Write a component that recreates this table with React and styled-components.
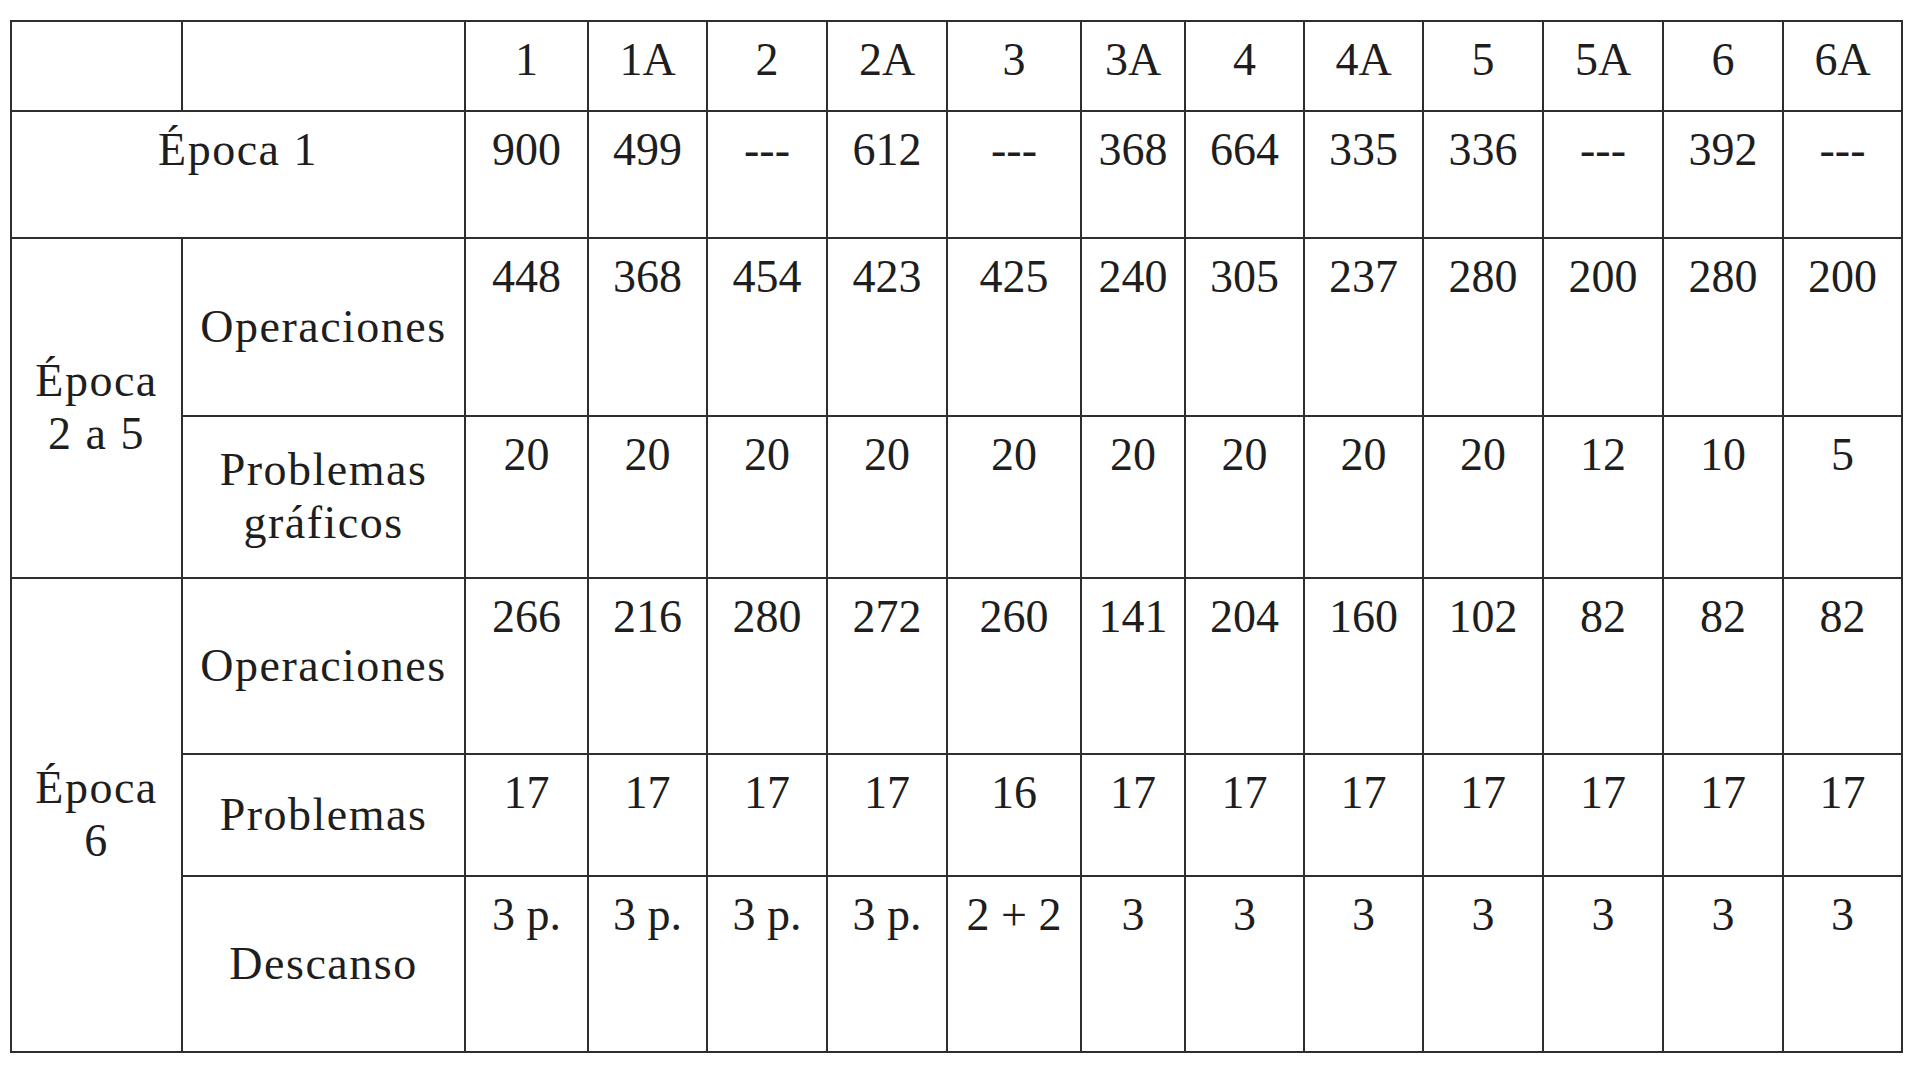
import React from 'react';
import styled, { createGlobalStyle } from 'styled-components';

const GlobalStyle = createGlobalStyle`
  html, body {
    margin: 0;
    padding: 0;
    background: #ffffff;
  }
  body {
    font-family: "Liberation Serif", "Times New Roman", serif;
    color: #1e1e1e;
  }
`;

const Page = styled.div`
  width: 1920px;
  height: 1069px;
  padding: 20px 0 0 10px;
  box-sizing: border-box;
  background: #fff;
  overflow: hidden;
`;

const Table = styled.table`
  border-collapse: collapse;
  table-layout: fixed;
  width: 1893px;
  font-size: 46px;
  line-height: 1.15;
`;

const Cell = styled.td`
  border: 2px solid #2e2e2e;
  box-sizing: border-box;
  height: ${(p) => p.$h}px;
  padding: ${(p) => (p.$label ? '0 4px' : '12px 0 0')};
  text-align: center;
  vertical-align: ${(p) => (p.$label ? 'middle' : 'top')};
  letter-spacing: ${(p) => (p.$label ? '1.5px' : '0')};
  white-space: nowrap;
`;

const TopCell = styled(Cell)`
  padding: 12px 0 0;
  vertical-align: top;
`;

const colWidths = [171, 283, 123, 119, 120, 120, 134, 104, 119, 119, 120, 120, 120, 119];

const headers = ['1', '1A', '2', '2A', '3', '3A', '4', '4A', '5', '5A', '6', '6A'];

const epoca1 = ['900', '499', '---', '612', '---', '368', '664', '335', '336', '---', '392', '---'];

const rows25 = {
  ops: ['448', '368', '454', '423', '425', '240', '305', '237', '280', '200', '280', '200'],
  graf: ['20', '20', '20', '20', '20', '20', '20', '20', '20', '12', '10', '5'],
};

const rows6 = {
  ops: ['266', '216', '280', '272', '260', '141', '204', '160', '102', '82', '82', '82'],
  prob: ['17', '17', '17', '17', '16', '17', '17', '17', '17', '17', '17', '17'],
  desc: ['3 p.', '3 p.', '3 p.', '3 p.', '2 + 2', '3', '3', '3', '3', '3', '3', '3'],
};

const Values = ({ values, h }) =>
  values.map((v, i) => (
    <Cell key={i} $h={h}>
      {v}
    </Cell>
  ));

const App = () => {
  return (
    <Page>
      <GlobalStyle />
      <Table>
        <colgroup>
          {colWidths.map((w, i) => (
            <col key={i} style={{ width: w }} />
          ))}
        </colgroup>
        <tbody>
          <tr>
            <Cell $h={90} />
            <Cell $h={90} />
            <Values values={headers} h={90} />
          </tr>
          <tr>
            <TopCell $h={127} colSpan={2} $label>
              Época 1
            </TopCell>
            <Values values={epoca1} h={127} />
          </tr>
          <tr>
            <Cell rowSpan={2} $label $h={178}>
              Época
              <br />2 a 5
            </Cell>
            <Cell $label $h={178}>
              Operaciones
            </Cell>
            <Values values={rows25.ops} h={178} />
          </tr>
          <tr>
            <Cell $label $h={162}>
              Problemas
              <br />
              gráficos
            </Cell>
            <Values values={rows25.graf} h={162} />
          </tr>
          <tr>
            <Cell rowSpan={3} $label $h={176}>
              Época
              <br />6
            </Cell>
            <Cell $label $h={176}>
              Operaciones
            </Cell>
            <Values values={rows6.ops} h={176} />
          </tr>
          <tr>
            <Cell $label $h={122}>
              Problemas
            </Cell>
            <Values values={rows6.prob} h={122} />
          </tr>
          <tr>
            <Cell $label $h={176}>
              Descanso
            </Cell>
            <Values values={rows6.desc} h={176} />
          </tr>
        </tbody>
      </Table>
    </Page>
  );
};

export default App;
